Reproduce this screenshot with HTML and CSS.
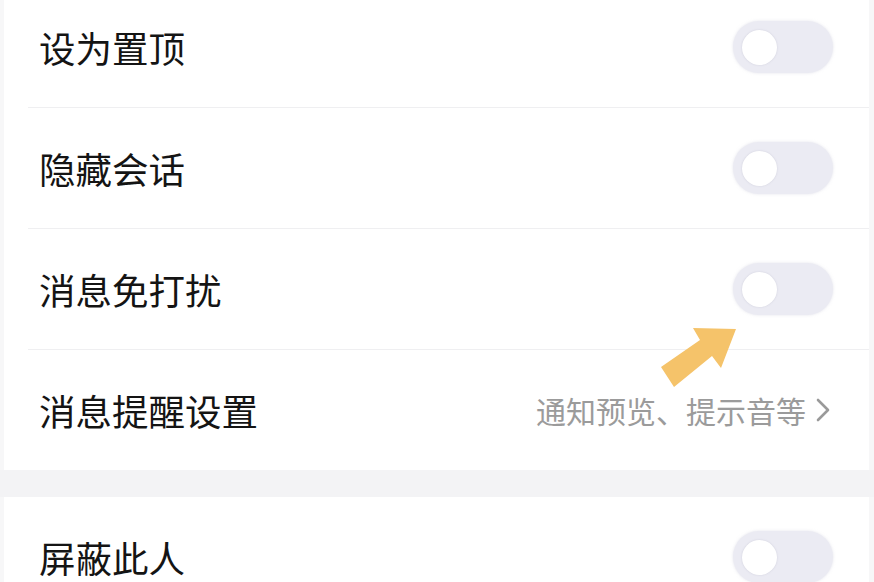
FILE: index.html
```html
<!DOCTYPE html>
<html lang="zh-CN">
<head>
    <meta charset="UTF-8">
    <meta name="viewport" content="width=device-width, initial-scale=1.0">
    <title>聊天设置</title>
    <link rel="stylesheet" href="styles.css">
</head>
<body>
    <div class="page">
        <div class="group group-first">
            <div class="row">
                <span class="label">设为置顶</span>
                <span class="switch"><span class="knob"></span></span>
            </div>
            <div class="row">
                <span class="label">隐藏会话</span>
                <span class="switch"><span class="knob"></span></span>
            </div>
            <div class="row">
                <span class="label">消息免打扰</span>
                <span class="switch"><span class="knob"></span></span>
            </div>
            <div class="row last">
                <span class="label">消息提醒设置</span>
                <span class="extra">
                    通知预览、提示音等
                    <svg class="chevron" width="14" height="24" viewBox="0 0 14 24">
                        <polyline points="2,2 12,12 2,22" fill="none" stroke="#9a9a9a" stroke-width="2.6" stroke-linecap="round" stroke-linejoin="round"/>
                    </svg>
                </span>
            </div>
        </div>
        <div class="gap"></div>
        <div class="group">
            <div class="row last">
                <span class="label">屏蔽此人</span>
                <span class="switch"><span class="knob"></span></span>
            </div>
        </div>
    </div>
    <svg class="pointer" width="874" height="582" viewBox="0 0 874 582">
        <polygon points="661,367 700,340 693,328 736,329 721,368 712,356 674,387" fill="#f5c36a"/>
    </svg>
</body>
</html>
```

FILE: styles.css
```css
body {
    margin: 0;
    padding: 0;
    height: 582px;
    overflow: hidden;
    background: #f7f7f8;
    font-family: "Noto Sans CJK SC", "Noto Sans", sans-serif;
    position: relative;
}
.page {
    display: flex;
    flex-direction: column;
    padding: 0 5px 0 4px;
}
.group {
    background: #fff;
}
.group-first {
    margin-top: -13px;
}
.gap {
    height: 27px;
    margin: 0 -5px 0 -4px;
    background: #f3f3f5;
}
.row {
    display: flex;
    align-items: center;
    justify-content: space-between;
    height: 120px;
    margin-left: 24px;
    padding: 0 36px 0 11px;
    border-bottom: 1px solid #efeff1;
}
.row.last {
    border-bottom: none;
}
.label {
    font-size: 36.5px;
    color: #141414;
}
.switch {
    width: 100px;
    height: 52px;
    border-radius: 26px;
    background: #ebebf3;
    box-shadow: 0 0 3px rgba(200, 200, 215, 0.5);
    display: flex;
    align-items: center;
    padding-left: 9px;
    box-sizing: border-box;
}
.knob {
    width: 35px;
    height: 35px;
    border-radius: 50%;
    background: #fff;
    box-shadow: 0 0 2px rgba(170, 170, 190, 0.45);
}
.extra {
    display: flex;
    align-items: center;
    gap: 10px;
    font-size: 30px;
    color: #9b9b9b;
    margin-right: 3px;
}
.pointer {
    position: absolute;
    left: 0;
    top: 0;
    pointer-events: none;
}
```
